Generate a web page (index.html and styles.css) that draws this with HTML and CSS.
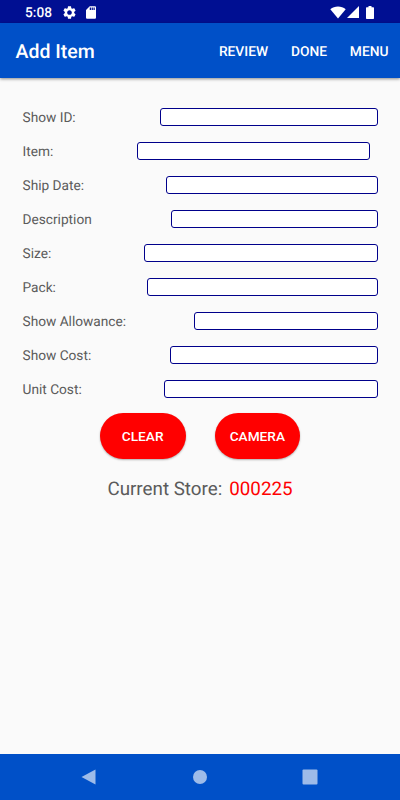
FILE: index.html
```
<!DOCTYPE html>
<html lang="en">
<head>
    <meta charset="UTF-8">
    <meta name="viewport" content="width=device-width, initial-scale=1.0">
    <title>Add Item</title>
    <link rel="stylesheet" href="styles.css">
</head>
<body>
    <div class="status-bar">
        <span class="time">5:08</span>
        <svg class="gear" viewBox="2 2 20 20"><path d="M19.14 12.94c.04-.3.06-.61.06-.94 0-.32-.02-.64-.07-.94l2.03-1.58c.18-.14.23-.41.12-.61l-1.92-3.32c-.12-.22-.37-.29-.59-.22l-2.39.96c-.5-.38-1.03-.7-1.62-.94l-.36-2.54c-.04-.24-.24-.41-.48-.41h-3.84c-.24 0-.43.17-.47.41l-.36 2.54c-.59.24-1.13.57-1.62.94l-2.39-.96c-.22-.08-.47 0-.59.22L2.74 8.87c-.12.21-.08.47.12.61l2.03 1.58c-.05.3-.09.63-.09.94s.02.64.07.94l-2.03 1.58c-.18.14-.23.41-.12.61l1.92 3.32c.12.22.37.29.59.22l2.39-.96c.5.38 1.03.7 1.62.94l.36 2.54c.05.24.24.41.48.41h3.84c.24 0 .44-.17.47-.41l.36-2.54c.59-.24 1.13-.56 1.62-.94l2.39.96c.22.08.47 0 .59-.22l1.92-3.32c.12-.22.07-.47-.12-.61l-2.01-1.58zM12 15.6c-1.98 0-3.6-1.62-3.6-3.6s1.62-3.6 3.6-3.6 3.6 1.62 3.6 3.6-1.62 3.6-3.6 3.6z"/></svg>
        <svg class="sd-card" viewBox="4 2 16 20"><path d="M18 2h-8L4.02 8 4 20c0 1.100.9 2 2 2h12c1.100 0 2-.9 2-2V4c0-1.100-.9-2-2-2zm-6 6h-2V4h2v4zm3 0h-2V4h2v4zm3 0h-2V4h2v4z"/></svg>
        <div class="indicators">
            <svg class="wifi" viewBox="0 0 16 13"><path d="M8 12.500L.3 3.200C2.500 1.400 5.100.5 8 .5s5.500.9 7.700 2.700z"/></svg>
            <svg class="signal" viewBox="0 0 12 12"><path d="M12 0v12H0z"/></svg>
            <svg class="battery" viewBox="0 0 8 13"><path d="M2.500 0h3v1.300H7.300q.7 0 .7.700v10.300q0 .7-.7.700H.7q-.7 0-.7-.7V2q0-.7.7-.7h1.800z"/></svg>
        </div>
    </div>

    <header class="toolbar">
        <h1>Add Item</h1>
        <nav>
            <a>REVIEW</a>
            <a>DONE</a>
            <a>MENU</a>
        </nav>
    </header>

    <main>
        <form>
            <div class="row">
                <label for="showId">Show ID:</label>
                <input type="text" id="showId" class="show-id">
            </div>
            <div class="row">
                <label for="item">Item:</label>
                <input type="text" id="item" class="item">
            </div>
            <div class="row">
                <label for="shipDate">Ship Date:</label>
                <input type="text" id="shipDate" class="ship-date">
            </div>
            <div class="row">
                <label for="description">Description</label>
                <input type="text" id="description" class="description">
            </div>
            <div class="row">
                <label for="size">Size:</label>
                <input type="text" id="size" class="size">
            </div>
            <div class="row">
                <label for="pack">Pack:</label>
                <input type="text" id="pack" class="pack">
            </div>
            <div class="row">
                <label for="showAllowance">Show Allowance:</label>
                <input type="text" id="showAllowance" class="show-allowance">
            </div>
            <div class="row">
                <label for="showCost">Show Cost:</label>
                <input type="text" id="showCost" class="show-cost">
            </div>
            <div class="row">
                <label for="unitCost">Unit Cost:</label>
                <input type="text" id="unitCost" class="unit-cost">
            </div>
            <div class="buttons">
                <button type="reset">CLEAR</button>
                <button type="button">CAMERA</button>
            </div>
        </form>
        <p class="store"><span>Current Store:</span><span class="store-number">000225</span></p>
    </main>

    <footer class="nav-bar">
        <svg viewBox="0 0 16 16"><path d="M14.500.4v15.200L.5 8z"/></svg>
        <svg viewBox="0 0 16 16"><circle cx="8" cy="8" r="7"/></svg>
        <svg viewBox="0 0 16 16"><rect x=".5" y=".5" width="15" height="15" rx="1"/></svg>
    </footer>
</body>
</html>
```

FILE: styles.css
```
* {
    box-sizing: border-box;
}
body {
    margin: 0;
    height: 100vh;
    display: flex;
    flex-direction: column;
    background-color: #fafafa;
    font-family: Roboto, sans-serif;
    font-size: 13.7px;
    color: #5b5b5b;
    overflow: hidden;
    text-rendering: geometricPrecision;
}
svg {
    display: block;
    fill: #fff;
}
.status-bar {
    display: flex;
    align-items: center;
    height: 23px;
    padding: 1px 26px 0 25px;
    background-color: #000f92;
    color: #fff;
}
.time {
    width: 38px;
    padding-top: 1px;
    font-weight: 500;
}
.gear {
    width: 13px;
    height: 13px;
}
.sd-card {
    width: 10px;
    height: 13px;
    margin-left: 10px;
}
.indicators {
    display: flex;
    align-items: center;
    margin-left: auto;
}
.wifi {
    width: 16px;
    height: 13px;
}
.signal {
    width: 12px;
    height: 12px;
    margin-left: 1px;
}
.battery {
    width: 8px;
    height: 13px;
    margin-left: 7px;
}
.toolbar {
    display: flex;
    align-items: center;
    justify-content: space-between;
    height: 54.5px;
    padding: 2px 11.5px 0 15.5px;
    background-color: #0050c8;
    color: #fff;
    box-shadow: 0 1px 3px rgba(0, 0, 0, 0.45);
}
h1 {
    margin: 0;
    font-size: 19.5px;
    font-weight: 500;
}
nav {
    display: flex;
    gap: 22.8px;
    padding-top: 1px;
    font-size: 13.8px;
    font-weight: 500;
}
main {
    flex: 1;
    padding: 23px 22.5px 0;
}
.row {
    display: flex;
    align-items: center;
    justify-content: space-between;
    height: 33.9px;
}
label {
    padding-top: 2px;
}
input {
    height: 18px;
    padding: 0 4px;
    border: 1px solid #00008b;
    border-radius: 3px;
    background-color: #fff;
}
.show-id {
    width: 217.5px;
}
.item {
    width: 232.5px;
    margin-right: 8px;
}
.ship-date {
    width: 211.5px;
}
.description {
    width: 206.5px;
}
.size {
    width: 233.5px;
}
.pack {
    width: 230.5px;
}
.show-allowance {
    width: 184px;
}
.show-cost {
    width: 207.5px;
}
.unit-cost {
    width: 213.5px;
}
.buttons {
    display: flex;
    justify-content: center;
    gap: 29px;
    margin-top: 7px;
}
button {
    width: 85.7px;
    height: 46.5px;
    padding: 1px 0 0;
    border: none;
    border-radius: 24px;
    background-color: #f00;
    color: #fff;
    font-family: inherit;
    font-size: 13.7px;
    font-weight: 500;
    box-shadow: 0 1px 2px rgba(0, 0, 0, 0.3);
}
.store {
    display: flex;
    justify-content: center;
    gap: 7px;
    margin: 19px 0 0;
    font-size: 18.8px;
}
.store-number {
    color: #f00;
}
.nav-bar {
    display: flex;
    align-items: center;
    justify-content: center;
    gap: 94.5px;
    height: 46.5px;
    padding-right: 1px;
    background-color: #0050c8;
}
.nav-bar svg {
    width: 16px;
    height: 16px;
    fill: #9dbbe9;
}
```
